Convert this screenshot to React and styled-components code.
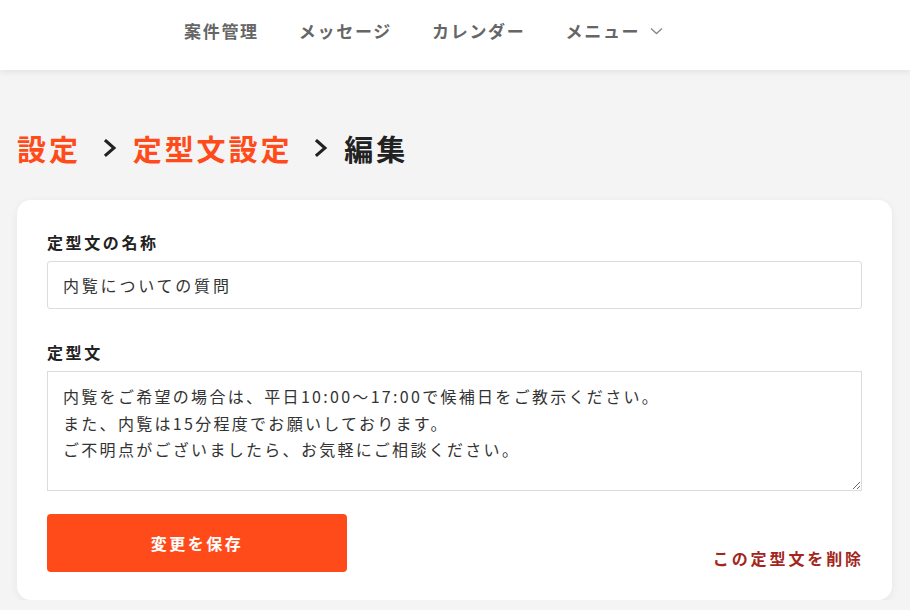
import React from "react";
import styled, { createGlobalStyle } from "styled-components";

const Global = createGlobalStyle`
  * { box-sizing: border-box; }
  html, body { margin: 0; padding: 0; background: #f4f4f4; }
  body {
    font-family: "Noto Sans CJK JP", "Noto Sans", sans-serif;
    color: #222;
    overflow: hidden;
  }
`;

const Header = styled.header`
  height: 70px;
  background: #fff;
  box-shadow: 0 2px 6px rgba(0, 0, 0, 0.08);
  display: flex;
  align-items: center;
  padding-left: 184px;
`;

const Nav = styled.nav`
  display: flex;
  align-items: center;
  gap: 40px;
  margin-top: -9px;
`;

const NavItem = styled.a`
  display: flex;
  align-items: center;
  gap: 10px;
  font-size: 17px;
  font-weight: 700;
  letter-spacing: 0.1em;
  color: #666;
  text-decoration: none;
  line-height: 24px;
`;

const Main = styled.main`
  padding: 57px 18px 0 17px;
`;

const Breadcrumb = styled.h1`
  margin: 0 0 31px;
  display: flex;
  align-items: center;
  font-size: 29px;
  font-weight: 700;
  letter-spacing: 0.1em;
  line-height: 42px;
`;

const Crumb = styled.span`
  color: ${(p) => (p.$current ? "#222" : "#ff4b1a")};
`;

const Sep = styled.span`
  display: flex;
  align-items: center;
  margin: 0 16px 0 22px;
  color: #222;
`;

const Card = styled.section`
  background: #fff;
  border-radius: 14px;
  box-shadow: 0 2px 8px rgba(0, 0, 0, 0.06);
  padding: 30px 30px 28px;
`;

const Field = styled.div`
  display: flex;
  flex-direction: column;
  gap: 7px;
  margin-bottom: ${(p) => p.$mb || 0}px;
`;

const Label = styled.label`
  font-size: 16px;
  font-weight: 700;
  line-height: 24px;
  letter-spacing: 2.6px;
  color: #222;
`;

const Input = styled.input`
  height: 48px;
  width: 100%;
  border: 1px solid #dcdcdc;
  border-radius: 3px;
  padding: 0 15px;
  font-family: inherit;
  font-size: 16px;
  letter-spacing: 2.8px;
  color: #333;
  outline: none;
`;

const TextArea = styled.textarea`
  display: block;
  height: 120px;
  width: 100%;
  border: 1px solid #dcdcdc;
  border-radius: 0;
  padding: 11px 15px;
  font-family: inherit;
  font-size: 16px;
  line-height: 26.5px;
  letter-spacing: 2.3px;
  color: #333;
  outline: none;
  resize: vertical;
`;

const Actions = styled.div`
  display: flex;
  justify-content: space-between;
  align-items: flex-end;
  margin-top: 23px;
`;

const SaveButton = styled.button`
  width: 300px;
  height: 58px;
  border: none;
  border-radius: 4px;
  background: #ff4b1a;
  color: #fff;
  font-family: inherit;
  font-size: 16px;
  font-weight: 700;
  letter-spacing: 2.5px;
  cursor: pointer;
`;

const DeleteLink = styled.a`
  font-size: 16px;
  font-weight: 700;
  letter-spacing: 2.9px;
  color: #a3261d;
  line-height: 24px;
  margin-bottom: 2px;
  margin-right: -2px;
  text-decoration: none;
`;

const Chevron = () => (
  <svg width="13" height="8" viewBox="0 0 13 8" fill="none">
    <path d="M1 1.5L6.5 6.5L12 1.5" stroke="#888" strokeWidth="1.3" />
  </svg>
);

const Arrow = () => (
  <svg width="14" height="20" viewBox="0 0 14 20" fill="none">
    <path d="M3 3L11 10L3 17" stroke="#222" strokeWidth="3" strokeLinecap="square" />
  </svg>
);

export default function App() {
  return (
    <>
      <Global />
      <Header>
        <Nav>
          <NavItem>案件管理</NavItem>
          <NavItem>メッセージ</NavItem>
          <NavItem>カレンダー</NavItem>
          <NavItem>
            メニュー
            <Chevron />
          </NavItem>
        </Nav>
      </Header>
      <Main>
        <Breadcrumb>
          <Crumb>設定</Crumb>
          <Sep>
            <Arrow />
          </Sep>
          <Crumb>定型文設定</Crumb>
          <Sep>
            <Arrow />
          </Sep>
          <Crumb $current>編集</Crumb>
        </Breadcrumb>
        <Card>
          <Field $mb={31}>
            <Label>定型文の名称</Label>
            <Input defaultValue="内覧についての質問" />
          </Field>
          <Field>
            <Label>定型文</Label>
            <TextArea
              defaultValue={
                "内覧をご希望の場合は、平日10:00～17:00で候補日をご教示ください。\nまた、内覧は15分程度でお願いしております。\nご不明点がございましたら、お気軽にご相談ください。"
              }
            />
          </Field>
          <Actions>
            <SaveButton>変更を保存</SaveButton>
            <DeleteLink>この定型文を削除</DeleteLink>
          </Actions>
        </Card>
      </Main>
    </>
  );
}
